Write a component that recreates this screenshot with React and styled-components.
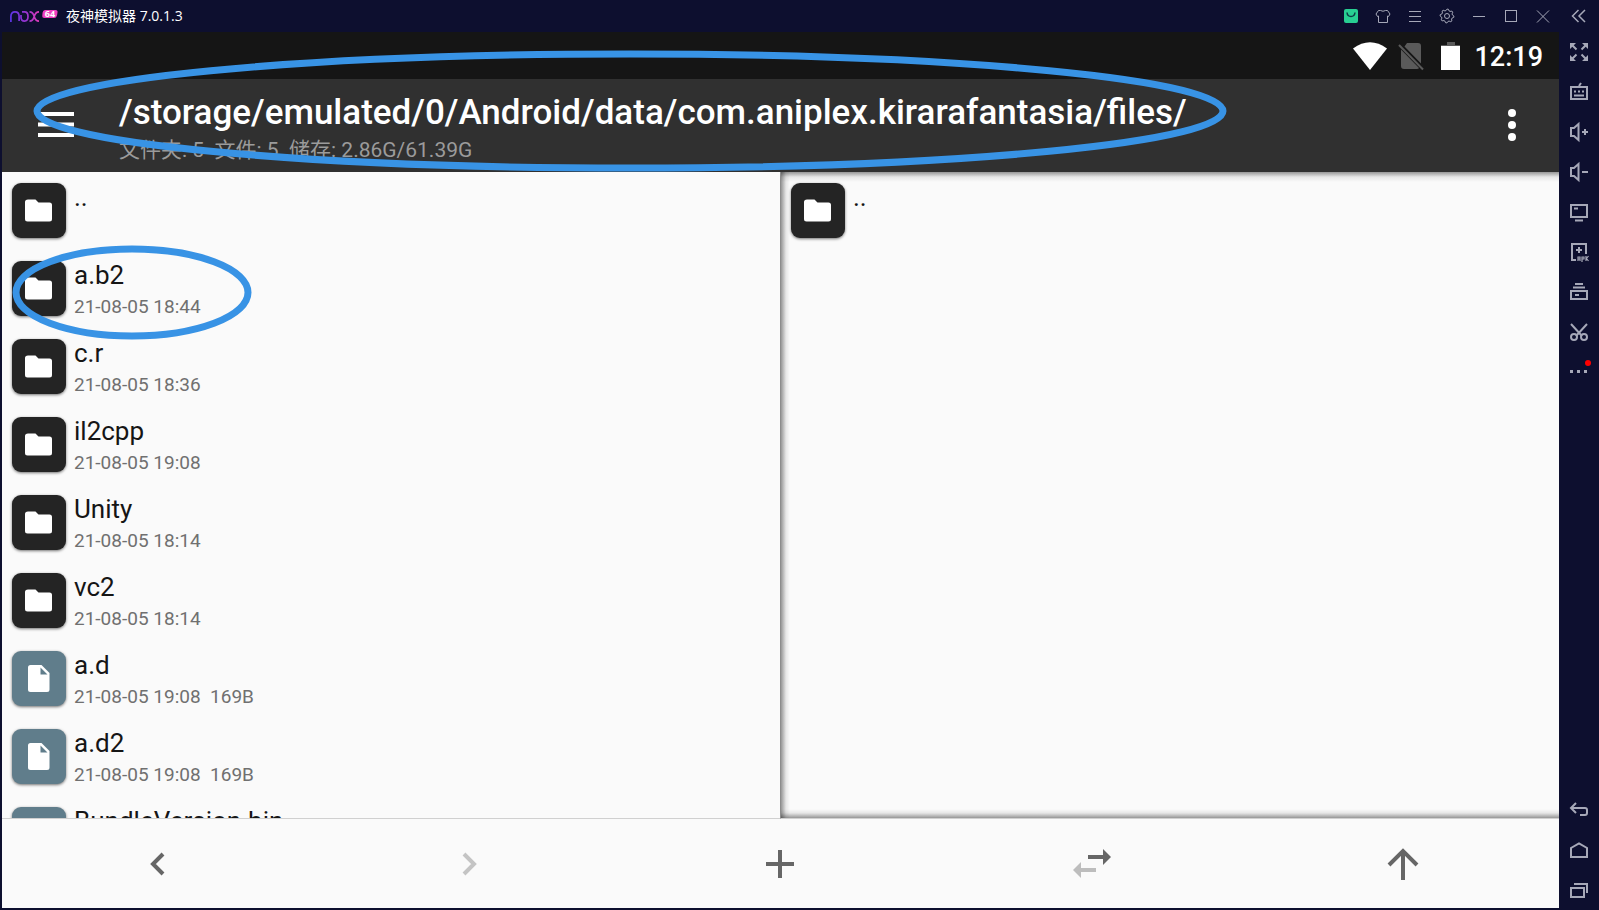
import React from 'react'
import styled, { createGlobalStyle, css } from 'styled-components'

const GlobalStyle = createGlobalStyle`
  * {
    box-sizing: border-box;
  }

  body {
    margin: 0;
    background: #0d0f2f;
    font-family: Roboto, "Noto Sans CJK SC", sans-serif;
  }

  button {
    display: flex;
    align-items: center;
    justify-content: center;
    margin: 0;
    padding: 0;
    border: 0;
    background: none;
    color: inherit;
    cursor: pointer;
  }

  svg {
    display: block;
    flex: none;
  }
`

const Window = styled.div`
  display: flex;
  flex-direction: column;
  height: 100vh;
  overflow: hidden;
  background: #0d0f2f;
`

const TitleBar = styled.header`
  display: flex;
  align-items: center;
  flex: none;
  height: 32px;
  padding: 0 10px;
  color: #a6a8b8;
`

const AppTitle = styled.h1`
  flex: 1;
  margin: 0 0 0 8px;
  color: #fff;
  font: 400 14px/20px "Open Sans", "Noto Sans CJK SC", sans-serif;
`

const TitleButtons = styled.div`
  display: flex;
  align-items: center;
`

const TitleButton = styled.button`
  width: 32px;
  height: 32px;

  &:last-child {
    width: 22px;
    margin-left: 8px;
  }
`

const Body = styled.div`
  display: flex;
  flex: 1;
  min-height: 0;
`

const Screen = styled.main`
  position: relative;
  display: flex;
  flex: 1;
  flex-direction: column;
  min-width: 0;
  margin: 0 0 2px 2px;
  background: #fafafa;
`

const StatusBar = styled.div`
  display: flex;
  align-items: center;
  justify-content: flex-end;
  flex: none;
  height: 47px;
  padding-right: 16px;
  background: #151515;
  color: #fff;
`

const Clock = styled.time`
  margin-left: 11px;
  padding-top: 3px;
  font-size: 27px;
  font-weight: 500;
  line-height: 44px;
`

const Toolbar = styled.div`
  display: flex;
  align-items: flex-start;
  flex: none;
  height: 93px;
  background: #303030;
  color: #fff;
`

const MenuButton = styled.button`
  width: 108px;
  height: 91px;
`

const MoreButton = styled.button`
  width: 94px;
  height: 92px;
`

const Location = styled.div`
  flex: 1;
  min-width: 0;
  padding: 12px 0 0 9px;
  white-space: pre;
`

const Path = styled.h2`
  margin: 0;
  font-size: 35px;
  font-weight: 500;
  line-height: 44px;
`

const Storage = styled.p`
  margin: 0;
  color: #9b9b9b;
  font-size: 21px;
  line-height: 30px;
`

const Panes = styled.div`
  display: flex;
  flex: 1;
  min-height: 0;
`

const Pane = styled.section`
  flex: 1;
  min-width: 0;
  overflow: hidden;
  border-bottom: 1px solid #d0d0d0;

  ${props => props.$inactive && css`
    border-left: 1px solid #8c8c8c;
    background:
      linear-gradient(to right, rgba(0, 0, 0, .4), rgba(0, 0, 0, .08) 5px, transparent 9px),
      linear-gradient(to bottom, rgba(0, 0, 0, .4), rgba(0, 0, 0, .08) 5px, transparent 10px),
      linear-gradient(to top, rgba(0, 0, 0, .4), rgba(0, 0, 0, .08) 5px, transparent 9px);
  `}
`

const List = styled.ul`
  margin: 0;
  padding: 0;
  list-style: none;
`

const Row = styled.li`
  position: relative;
  display: flex;
  height: 78px;
  padding: 11px 0 0 10px;
`

const Tile = styled.span`
  display: flex;
  align-items: center;
  justify-content: center;
  flex: none;
  width: 54px;
  height: 55px;
  border-radius: 9px;
  background: ${props => props.$file ? '#607d8b' : '#242424'};
  box-shadow: 0 1px 3px rgba(0, 0, 0, .55);
`

const Entry = styled.div`
  margin-left: 8px;
  white-space: pre;
`

const EntryName = styled.div`
  color: #151515;
  font-size: 26px;
  line-height: 28px;
`

const EntryInfo = styled.div`
  margin-top: 5px;
  color: #707070;
  font-size: 19px;
  line-height: 26px;
`

const BottomBar = styled.nav`
  display: grid;
  grid-template-columns: repeat(5, 1fr);
  flex: none;
  height: 89px;
  background: #fafafa;
  color: #666;
`

const Sidebar = styled.aside`
  display: flex;
  flex-direction: column;
  justify-content: space-between;
  flex: none;
  width: 40px;
  color: #a6a8b8;
`

const SideButton = styled.button`
  width: 40px;
  height: 40px;
`

// hand-drawn rings that lie over the screen
const Ring = styled.svg`
  position: absolute;
  z-index: 1;
  pointer-events: none;
  fill: none;
  stroke: #3893e5;
  stroke-width: 7;
`

const PathRing = styled(Ring)`
  top: 18px;
  left: 31px;
`

const RowRing = styled(Ring)`
  top: -5px;
  left: 10px;
`

const NoxLogo = () => (
  <svg width="48" height="16" viewBox="0 0 48 16" role="img" aria-label="nox 64">
    <defs>
      <linearGradient id="nox" x1="0" x2="30" y1="0" y2="0" gradientUnits="userSpaceOnUse">
        <stop offset="0" stopColor="#5b35e8" />
        <stop offset=".6" stopColor="#a034cc" />
        <stop offset="1" stopColor="#e63bb8" />
      </linearGradient>
    </defs>
    <g fill="none" stroke="url(#nox)" strokeWidth="1.7">
      <path d="M.9 14V8.500Q.9 3.900 5 3.900T9.100 8.500V13.100" />
      <path d="M12 3.900H14.500Q18 3.900 18 8.500T14.500 13.100Q11 13.100 11 9V7" />
      <path d="M19.500 3.900Q23 3.900 24.200 8.500Q25.500 13.100 29 13.100M29 3.900Q25.500 3.900 24.200 8.500Q23 13.100 19.500 13.100" />
    </g>
    <path d="M35 2H45.500Q48 2 47.500 4.500L47 7.500Q46.500 10 44 10H34.500Q32 10 32.300 7.500L32.600 4.500Q33 2 35 2Z" fill="#f03fc0" />
    <text x="40" y="9" textAnchor="middle" fill="#fff" fontFamily="Open Sans, sans-serif" fontSize="9" fontWeight="700">64</text>
  </svg>
)

const FolderIcon = () => (
  <svg width="28" height="24" viewBox="0 0 28 24" fill="#fff">
    <path d="M3 .5H10.500L13.500 3.500H24.500Q27 3.500 27 6V20Q27 22.500 24.500 22.500H2.500Q0 22.500 0 20V3Q0 .5 3 .5Z" />
  </svg>
)

const FileIcon = () => (
  <svg width="22" height="28" viewBox="0 0 22 28">
    <path d="M2.500 0H13.500L21.500 8V24.500Q21.500 27 19 27H2.500Q0 27 0 24.500V2.500Q0 0 2.500 0ZM12.500 2.500V9.500H19.500Z" fill="#fff" fillRule="evenodd" />
  </svg>
)

const gear = Array.from({ length: 33 }, (_, i) => {
  const angle = (i * Math.PI) / 16
  const r = i % 4 < 2 ? 6.9 : 5.5
  return `${i ? 'L' : 'M'}${(8 + r * Math.cos(angle)).toFixed(2)} ${(8 + r * Math.sin(angle)).toFixed(2)}`
}).join('')

const titleIcons = [
  { label: '应用中心', art: <><rect x="1" y="1" width="14" height="14" rx="2" fill="#28cf92" stroke="none" /><path d="M4 4.500Q4.500 8.500 8 8.500T12 4.500" stroke="#0d3b45" strokeWidth="1.500" /></> },
  { label: '主题', art: <path d="M5.500 2.500Q8 4 10.500 2.500L12.500 2.500L15 6L13.500 8.500L12.500 8V14.500H3.500V8L2.500 8.500L1 6L3.500 2.500Z" /> },
  { label: '菜单', art: <path d="M2 3.500H14M2 8.500H14M2 13.500H14" /> },
  { label: '设置', art: <><path d={gear} /><circle cx="8" cy="8" r="2.500" /></> },
  { label: '最小化', art: <path d="M2 8.500H14" /> },
  { label: '最大化', art: <rect x="2.500" y="2.500" width="11" height="11" /> },
  { label: '关闭', art: <path d="M2 2.500L14 14.500M14 2.500L2 14.500" /> },
  { label: '收起', art: <path d="M8.500 2L2.500 8L8.500 14M15 2L9 8L15 14" strokeWidth="1.500" /> },
]

const sideTop = [
  { label: '全屏', art: <><path d="M1 1H7L1 7ZM19 1H13L19 7ZM1 19H7L1 13ZM19 19H13L19 13Z" fill="currentColor" stroke="none" /><path d="M3 3L7.500 7.500M17 3L12.500 7.500M3 17L7.500 12.500M17 17L12.500 12.500" /></> },
  { label: '键盘', art: <><path d="M2 5H18V17H2ZM5 13.500H15M10 4L12 1" /><path d="M5 9.500H7M9 9.500H11M13 9.500H15" /></> },
  { label: '音量加', art: <path d="M2 6H5L9.500 2V18L5 14H2ZM13 10H19M16 7V13" /> },
  { label: '音量减', art: <path d="M2 6H5L9.500 2V18L5 14H2ZM13 10H19" /> },
  { label: '虚拟屏幕', art: <path d="M2 3H18V15H2ZM5 6.500H9M6 18.500H14" /> },
  { label: '安装APK', art: <><path d="M7 18H3V2H17V12M10 5V11M7 8H13" /><path d="M9 19V15H11V19M9 17H11M13 20V15H15V17H13M17 14V19M19.500 14L17.500 16.500L19.500 19" strokeWidth="1.200" /></> },
  { label: '多开', art: <path d="M2 9H18V17H2ZM4 5.500H16M6 2H14M6 13H10" /> },
  { label: '截图', art: <><path d="M2 2L13 14M18 2L7 14" /><circle cx="5" cy="15" r="3" /><circle cx="15" cy="15" r="3" /></> },
  { label: '更多', art: <><path d="M1 9.500H4M8 9.500H11M15 9.500H18" strokeWidth="3" /><circle cx="19" cy="1" r="3" fill="#f00" stroke="none" /></> },
]

const sideBottom = [
  { label: '返回', art: <path d="M7 3L2 8L7 13M2 8H16Q18 8 18 10V13Q18 15 16 15H11" /> },
  { label: '主页', art: <path d="M2 17V8L10 3.500L18 8V17Z" /> },
  { label: '任务', art: <path d="M2 8H15V17H2ZM5 4H18V13" /> },
]

const IconSet = ({ icons, size, as: Button, stroke = 1 }) => (
  icons.map(({ label, art }) => (
    <Button key={label} type="button" aria-label={label}>
      <svg width={size} height={size} fill="none" stroke="currentColor" strokeWidth={stroke} overflow="visible">
        {art}
      </svg>
    </Button>
  ))
)

const entries = [
  { name: '..' },
  { name: 'a.b2', info: '21-08-05 18:44', ringed: true },
  { name: 'c.r', info: '21-08-05 18:36' },
  { name: 'il2cpp', info: '21-08-05 19:08' },
  { name: 'Unity', info: '21-08-05 18:14' },
  { name: 'vc2', info: '21-08-05 18:14' },
  { name: 'a.d', info: '21-08-05 19:08  169B', file: true },
  { name: 'a.d2', info: '21-08-05 19:08  169B', file: true },
  { name: 'BundleVersion.bin', file: true },
]

const FileRow = ({ entry }) => (
  <Row>
    <Tile $file={entry.file}>{entry.file ? <FileIcon /> : <FolderIcon />}</Tile>
    <Entry>
      <EntryName>{entry.name}</EntryName>
      {entry.info && <EntryInfo>{entry.info}</EntryInfo>}
    </Entry>
    {entry.ringed && (
      <RowRing width="240" height="95">
        <ellipse cx="120" cy="47.5" rx="116" ry="43.5" />
      </RowRing>
    )}
  </Row>
)

const StatusIcons = () => (
  <svg width="110" height="30" viewBox="0 0 110 30" fill="#fff">
    <path d="M0 7.500Q17 -5 34 7.500L17 29Z" />
    <path d="M54 2H65Q68 2 68 5V22.500L51.500 5.500ZM48 8.500L66 27Q65.500 28 64 28H51Q48 28 48 25Z" fill="#5a5a5a" />
    <path d="M46 4L70 28.500" stroke="#5a5a5a" strokeWidth="2" />
    <path d="M94 1H102V4H107V6H88V4H94Z" fill="#5a5a5a" />
    <path d="M88 5H107V29H88Z" />
  </svg>
)

const App = () => {
  return (
    <>
      <GlobalStyle />
      <Window>
        <TitleBar>
          <NoxLogo />
          <AppTitle>夜神模拟器 7.0.1.3</AppTitle>
          <TitleButtons>
            <IconSet icons={titleIcons} size={16} as={TitleButton} />
          </TitleButtons>
        </TitleBar>
        <Body>
          <Screen>
            <StatusBar>
              <StatusIcons />
              <Clock>12:19</Clock>
            </StatusBar>
            <Toolbar>
              <MenuButton type="button" aria-label="打开菜单">
                <svg width="36" height="25" stroke="currentColor" strokeWidth="4">
                  <path d="M0 2H36M0 12.500H36M0 23H36" />
                </svg>
              </MenuButton>
              <Location>
                <Path>/storage/emulated/0/Android/data/com.aniplex.kirarafantasia/files/</Path>
                <Storage>文件夹: 5  文件: 5  储存: 2.86G/61.39G</Storage>
              </Location>
              <MoreButton type="button" aria-label="更多选项">
                <svg width="8" height="32" fill="currentColor">
                  <circle cx="4" cy="4" r="4" />
                  <circle cx="4" cy="16" r="4" />
                  <circle cx="4" cy="28" r="4" />
                </svg>
              </MoreButton>
            </Toolbar>
            <Panes>
              <Pane>
                <List>
                  {entries.map(entry => <FileRow key={entry.name} entry={entry} />)}
                </List>
              </Pane>
              <Pane $inactive>
                <List>
                  <FileRow entry={entries[0]} />
                </List>
              </Pane>
            </Panes>
            <BottomBar>
              <button type="button" aria-label="后退">
                <svg width="16" height="24" fill="none" stroke="currentColor" strokeWidth="4">
                  <path d="M13 2L3 12L13 22" />
                </svg>
              </button>
              <button type="button" aria-label="前进" disabled>
                <svg width="16" height="24" fill="none" stroke="#c4c4c4" strokeWidth="4">
                  <path d="M3 2L13 12L3 22" />
                </svg>
              </button>
              <button type="button" aria-label="新建">
                <svg width="28" height="28" stroke="currentColor" strokeWidth="4">
                  <path d="M0 14H28M14 0V28" />
                </svg>
              </button>
              <button type="button" aria-label="交换">
                <svg width="38" height="30">
                  <path d="M15 6H30V0L38 8L30 16V10H15Z" fill="#666" />
                  <path d="M23 19H8V13L0 21L8 29V23H23Z" fill="#bdbdbd" />
                </svg>
              </button>
              <button type="button" aria-label="上一级">
                <svg width="32" height="32" fill="none" stroke="currentColor" strokeWidth="4">
                  <path d="M16 32V4M2 17L16 3L30 17" />
                </svg>
              </button>
            </BottomBar>
            <PathRing width="1194" height="122">
              <ellipse cx="597" cy="61" rx="593" ry="57" />
            </PathRing>
          </Screen>
          <Sidebar>
            <div>
              <IconSet icons={sideTop} size={20} stroke={2} as={SideButton} />
            </div>
            <div>
              <IconSet icons={sideBottom} size={20} stroke={2} as={SideButton} />
            </div>
          </Sidebar>
        </Body>
      </Window>
    </>
  )
}

export default App
